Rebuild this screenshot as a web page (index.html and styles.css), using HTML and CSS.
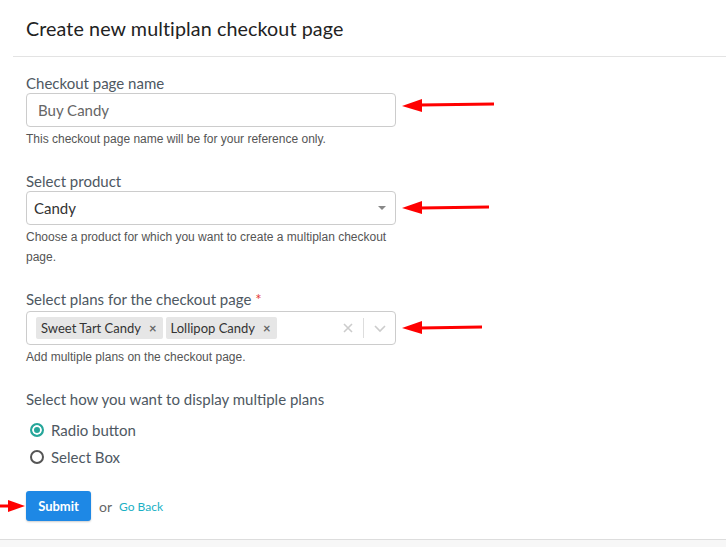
FILE: index.html
```html
<!DOCTYPE html>
<html lang="en">
<head>
	<meta charset="UTF-8">
	<title>Create new multiplan checkout page</title>
	<link rel="stylesheet" href="styles.css">
</head>
<body>
	<div class="page">
		<h1 class="title">Create new multiplan checkout page</h1>
		<div class="rule"></div>

		<form class="form">
			<div class="field">
				<label class="label">Checkout page name</label>
				<div class="input">Buy Candy</div>
				<p class="help">This checkout page name will be for your reference only.</p>
			</div>

			<div class="field">
				<label class="label">Select product</label>
				<div class="select">
					<span>Candy</span>
					<i class="caret"></i>
				</div>
				<p class="help">Choose a product for which you want to create a multiplan checkout page.</p>
			</div>

			<div class="field">
				<label class="label plans">Select plans for the checkout page <span class="req">*</span></label>
				<div class="multi">
					<div class="tags">
						<span class="tag">Sweet Tart Candy <b>&times;</b></span>
						<span class="tag">Lollipop Candy <b>&times;</b></span>
					</div>
					<div class="controls">
						<svg width="12" height="12" viewBox="0 0 12 12"><path d="M2 2L10 10M10 2L2 10" stroke="#ccc" stroke-width="1.6"/></svg>
						<span class="sep"></span>
						<svg width="14" height="10" viewBox="0 0 14 10"><path d="M2 3L7 8L12 3" stroke="#ccc" stroke-width="1.6" fill="none"/></svg>
					</div>
				</div>
				<p class="help">Add multiple plans on the checkout page.</p>
			</div>

			<div class="field">
				<label class="label">Select how you want to display multiple plans</label>
				<ul class="radios">
					<li><span class="radio checked"></span>Radio button</li>
					<li><span class="radio"></span>Select Box</li>
				</ul>
			</div>

			<div class="actions">
				<a class="btn" href="">Submit</a>
				<span class="or">or</span>
				<a class="back" href="">Go Back</a>
			</div>
		</form>
	</div>
	<div class="footer"></div>

	<!-- annotation arrows -->
	<svg class="arrows" width="726" height="547" viewBox="0 0 726 547">
		<g fill="#f00" stroke="#f00">
			<line x1="420" y1="105" x2="494" y2="104" stroke-width="3"/>
			<polygon points="402,106 422,99 422,112" stroke="none"/>
			<line x1="420" y1="208" x2="489" y2="207" stroke-width="3"/>
			<polygon points="402,208 422,201 422,214" stroke="none"/>
			<line x1="420" y1="328" x2="482" y2="327" stroke-width="3"/>
			<polygon points="402,328 422,321 422,334" stroke="none"/>
			<line x1="0" y1="506" x2="10" y2="506" stroke-width="3"/>
			<polygon points="25,506 8,500 8,512" stroke="none"/>
		</g>
	</svg>
</body>
</html>
```

FILE: styles.css
```css
*{margin:0;padding:0;box-sizing:border-box;}
body{font-family:Lato,"Open Sans",sans-serif;color:#333;background:#fff;width:726px;height:547px;position:relative;overflow:hidden;}
a{text-decoration:none;}
ul{list-style:none;}

.page{height:539px;padding-left:13px;}
.title{font-size:19.7px;font-weight:400;color:#222;padding:17px 0 0 13px;height:56px;letter-spacing:0.1px;}
.rule{height:1px;background:#e3e3e3;}

.form{padding:16px 0 0 13px;width:383px;}
.field{margin-bottom:22px;}
.label{display:block;font-size:15px;color:#4e5862;line-height:20px;}
.label.plans{margin-bottom:2px;}
.req{color:#e53935;}
.help{font-family:"Liberation Sans",Arial,sans-serif;font-size:12px;color:#555;line-height:20px;margin-top:2px;}

.input,.select,.multi{width:370px;height:34px;border:1px solid #ccc;border-radius:4px;background:#fff;font-size:15px;}
.input{padding:0 11px;line-height:32px;color:#666;}
.select{padding:0 7px;line-height:32px;color:#333;display:flex;justify-content:space-between;align-items:center;}
.caret{display:block;width:0;height:0;border-left:4px solid transparent;border-right:4px solid transparent;border-top:4px solid #888;margin-right:2px;}

.multi{display:flex;justify-content:space-between;align-items:center;padding:0 8px 0 9px;}
.tags{display:flex;gap:3px;}
.tag{background:#e6e6e6;border-radius:2px;font-size:13px;color:#333;height:22px;line-height:22px;padding:0 6px 0 5px;}
.tag b{font-weight:700;color:#666;margin-left:5px;font-size:13px;}
.controls{display:flex;align-items:center;gap:9px;}
.sep{width:1px;height:20px;background:#ddd;}

.radios{padding:7px 0 0 4px;}
.radios li{display:flex;align-items:center;font-size:15px;color:#4e5862;height:27px;}
.radio{width:14px;height:14px;border:2px solid #555;border-radius:50%;margin-right:7px;}
.radio.checked{border-color:#26a69a;background:#26a69a;box-shadow:inset 0 0 0 2px #fff;}

.actions{display:flex;align-items:center;margin-top:-1px;}
.btn{display:inline-block;background:#1e88e5;color:#fff;font-weight:700;font-size:13px;height:30px;line-height:30px;width:65px;text-align:center;border-radius:3px;box-shadow:0 1px 2px rgba(0,0,0,.2);}
.or{font-size:14px;color:#666;margin:0 7px 0 8px;}
.back{font-size:12px;color:#1ab0c4;}

.footer{height:8px;border-top:1px solid #ddd;background:#f7f7f7;}
.arrows{position:absolute;left:0;top:0;pointer-events:none;}
```
